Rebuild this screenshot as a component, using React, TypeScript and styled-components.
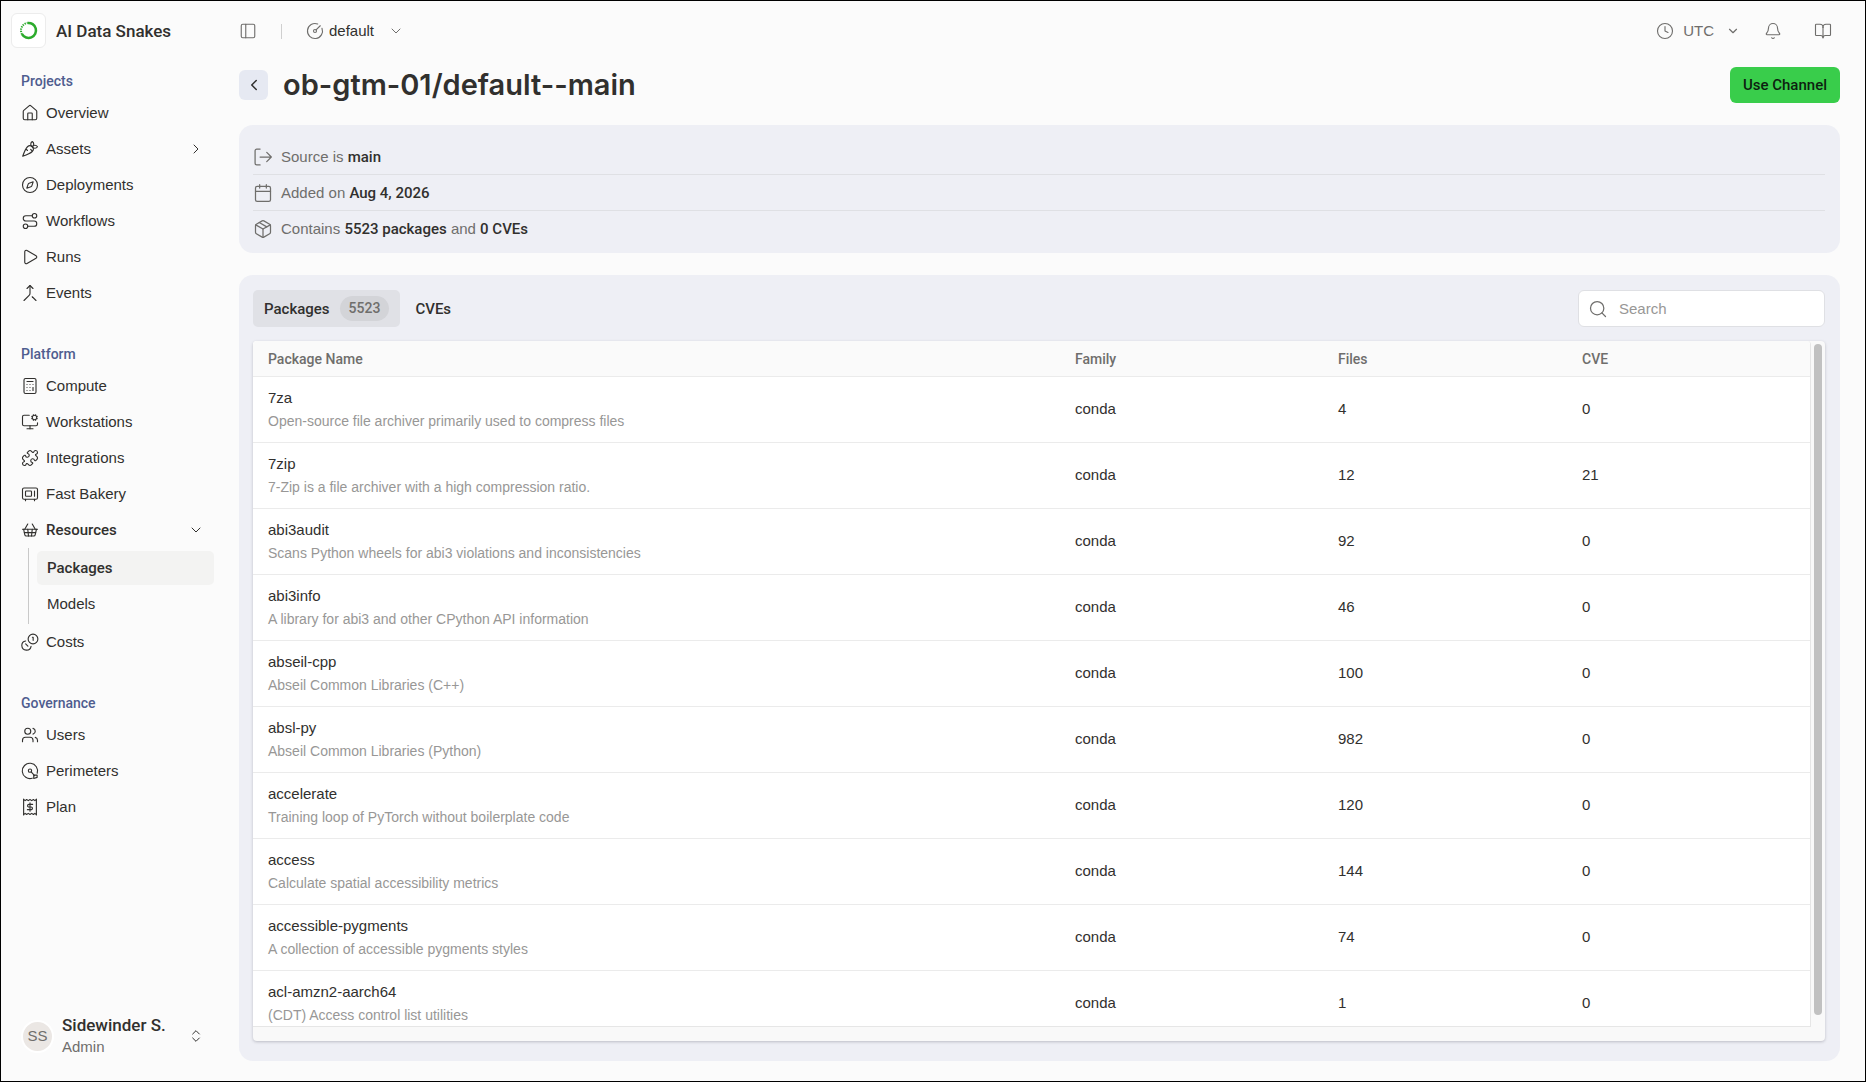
import React from "react";
import styled, { createGlobalStyle } from "styled-components";
import {
  Bell,
  BookOpen,
  Calculator,
  Calendar,
  Carrot,
  ChevronDown,
  ChevronLeft,
  ChevronRight,
  ChevronsUpDown,
  CircleGauge,
  Clock,
  Compass,
  House,
  Merge,
  Microwave,
  MonitorCog,
  Package,
  PanelLeft,
  Play,
  Puzzle,
  Route,
  Search,
  ShoppingBasket,
  Users,
} from "lucide-react";

const fonts = {
  body: '"Liberation Sans", Arial, sans-serif',
  strong: 'Roboto, "Liberation Sans", sans-serif',
  display: 'Inter, "Liberation Sans", sans-serif',
};

const colors = {
  page: "#fbfbfb",
  panel: "#eeeff5",
  line: "#dfe0e4",
  ink: "#31302e",
  muted: "#6f6e6c",
  faint: "#989796",
  heading: "#4f5d8f",
  accent: "#39cd4b",
};

const GlobalStyle = createGlobalStyle`
  *, *::before, *::after { box-sizing: border-box; }
  body {
    margin: 0;
    background: ${colors.page};
    color: ${colors.ink};
    font-family: ${fonts.body};
    font-size: 15px;
    line-height: 20px;
  }
  button, input, select { font: inherit; color: inherit; }
  button { border: 0; background: none; padding: 0; cursor: pointer; }
  a { color: inherit; text-decoration: none; }
  ul { list-style: none; margin: 0; padding: 0; }
  svg { flex: none; display: block; }
`;

const Shell = styled.div`
  display: flex;
  height: 100vh;
  min-height: 640px;
  border: 1px solid #000;
  background: ${colors.page};
`;

const Sidebar = styled.aside`
  display: flex;
  flex-direction: column;
  flex: none;
  width: 238px;
  padding: 12px 25px 23px 10px;
`;

const Brand = styled.div`
  display: flex;
  align-items: center;
  gap: 10px;
  margin-bottom: 20px;
`;

const BrandMark = styled.span`
  display: grid;
  place-items: center;
  width: 35px;
  height: 35px;
  border: 1px solid #ececec;
  border-radius: 6px;
  background: #fff;
`;

const BrandName = styled.span`
  font-family: ${fonts.strong};
  font-size: 17px;
  font-weight: 500;
`;

const NavSection = styled.section`
  margin-bottom: 30px;
`;

const NavHeading = styled.h2`
  margin: 0;
  padding: 0 10px;
  font-family: ${fonts.strong};
  font-size: 14px;
  font-weight: 500;
  line-height: 27px;
  color: ${colors.heading};
`;

const NavLink = styled.a<{ $open?: boolean }>`
  display: flex;
  align-items: center;
  gap: 7px;
  height: 36px;
  padding: 0 10px;
  font-family: ${({ $open }) => ($open ? fonts.strong : fonts.body)};
  font-weight: ${({ $open }) => ($open ? 500 : 400)};
`;

const NavLabel = styled.span`
  flex: 1;
`;

const SubNav = styled.ul`
  && {
    padding: 3px 0 3px 8px;
    margin-left: 17px;
  }
  display: flex;
  flex-direction: column;
  gap: 2px;
  border-left: 1px solid #c9c9c9;
`;

const SubLink = styled.a<{ $active?: boolean }>`
  display: flex;
  align-items: center;
  height: 34px;
  padding: 0 10px;
  border-radius: 5px;
  background: ${({ $active }) => ($active ? "#f3f3f2" : "transparent")};
  font-family: ${({ $active }) => ($active ? fonts.strong : fonts.body)};
  font-weight: ${({ $active }) => ($active ? 500 : 400)};
`;

const Account = styled.button`
  display: flex;
  align-items: center;
  gap: 8px;
  margin-top: auto;
  padding: 0 10px;
  text-align: left;
`;

const Avatar = styled.span`
  display: grid;
  place-items: center;
  width: 33px;
  height: 33px;
  border: 2px solid #fff;
  border-radius: 50%;
  background: #ebe7e4;
  color: ${colors.muted};
`;

const AccountText = styled.span`
  display: flex;
  flex: 1;
  flex-direction: column;
  line-height: 22px;
  color: ${colors.muted};
`;

const AccountName = styled.strong`
  font-family: ${fonts.strong};
  font-size: 17px;
  font-weight: 500;
  color: ${colors.ink};
`;

const Main = styled.main`
  display: flex;
  flex: 1;
  flex-direction: column;
  min-width: 0;
  padding: 10px 25px 20px 0;
`;

const TopBar = styled.header`
  display: flex;
  align-items: center;
  justify-content: space-between;
  height: 40px;
  padding: 0 8px 0 0;
  color: ${colors.muted};
`;

const TopGroup = styled.div<{ $gap?: number }>`
  display: flex;
  align-items: center;
  gap: ${({ $gap = 0 }) => $gap}px;
`;

const IconButton = styled.button`
  display: grid;
  place-items: center;
  width: 18px;
  height: 32px;
`;

const Divider = styled.span`
  width: 1px;
  height: 15px;
  background: #cfcfcf;
`;

const PickerButton = styled.button`
  display: flex;
  align-items: center;
`;

const PickerLabel = styled.span<{ $strong?: boolean }>`
  margin: ${({ $strong }) => ($strong ? "0 14px 0 5px" : "0 12px 0 9px")};
  color: ${({ $strong }) => ($strong ? colors.ink : colors.muted)};
`;

const TitleRow = styled.div`
  display: flex;
  align-items: center;
  gap: 15px;
  margin: 16px 0 22px;
`;

const BackLink = styled.a`
  display: grid;
  place-items: center;
  width: 29px;
  height: 30px;
  border-radius: 6px;
  background: #e6e9f2;
`;

const Title = styled.h1`
  flex: 1;
  margin: 0;
  font-family: ${fonts.display};
  font-size: 29px;
  font-weight: 600;
  line-height: 36px;
`;

const PrimaryButton = styled.button`
  height: 36px;
  padding: 0 13px;
  border-radius: 6px;
  background: ${colors.accent};
  color: #0d1f10;
  font-family: ${fonts.strong};
  font-weight: 500;
`;

const Facts = styled.ul`
  && {
    padding: 14px 15px 7px 14px;
  }
  border-radius: 14px;
  background: ${colors.panel};
`;

const Fact = styled.li`
  display: flex;
  align-items: center;
  gap: 8px;
  height: 35px;
  color: ${colors.muted};

  & + & {
    height: 36px;
    border-top: 1px solid ${colors.line};
  }

  strong {
    font-family: ${fonts.strong};
    font-weight: 500;
    color: ${colors.ink};
  }
`;

const Panel = styled.section`
  display: flex;
  flex: 1;
  flex-direction: column;
  gap: 14px;
  min-height: 0;
  margin-top: 22px;
  padding: 15px 15px 20px 14px;
  border-radius: 14px;
  background: ${colors.panel};
`;

const PanelTools = styled.div`
  display: flex;
  align-items: center;
  justify-content: space-between;
`;

const Tabs = styled.div`
  display: flex;
  gap: 4px;
`;

const Tab = styled.button<{ $active?: boolean }>`
  display: flex;
  align-items: center;
  gap: 10px;
  height: 37px;
  padding: 0 11px;
  border-radius: 5px;
  background: ${({ $active }) => ($active ? "#e0e1e6" : "transparent")};
  font-family: ${fonts.strong};
  font-weight: 500;
`;

const Count = styled.span`
  padding: 2px 9px;
  border-radius: 13px;
  background: #d3d4d8;
  color: ${colors.muted};
  font-size: 14px;
  line-height: 21px;
`;

const SearchBox = styled.label`
  display: flex;
  align-items: center;
  gap: 11px;
  width: 247px;
  height: 37px;
  padding: 0 9px;
  border: 1px solid ${colors.line};
  border-radius: 6px;
  background: #fff;
  color: ${colors.muted};
`;

const SearchInput = styled.input`
  flex: 1;
  min-width: 0;
  border: 0;
  padding: 0;
  outline: 0;
  background: transparent;

  &::placeholder {
    color: ${colors.faint};
    opacity: 1;
  }
`;

const TableFrame = styled.div`
  display: flex;
  flex: 1;
  min-height: 0;
  padding-bottom: 14px;
  border-radius: 4px;
  background: #f9f9f9;
  box-shadow: 0 1px 3px rgba(40, 40, 60, 0.25);
`;

const TableViewport = styled.div`
  flex: 1;
  overflow: hidden;
  border: solid #e6e6e6;
  border-width: 0 1px 1px 0;
  border-radius: 4px 4px 0 0;
  background: #fff;
`;

const ScrollTrack = styled.div`
  flex: none;
  width: 14px;
  padding: 3px 3px 12px;
`;

const ScrollThumb = styled.div`
  height: 100%;
  border-radius: 4px;
  background: #c1c1c1;
`;

const Table = styled.table`
  width: 100%;
  border-collapse: separate;
  border-spacing: 0;
  table-layout: fixed;
`;

const HeadCell = styled.th<{ $width?: number }>`
  width: ${({ $width }) => ($width ? `${$width}px` : "auto")};
  height: 36px;
  padding: 0 15px;
  border-bottom: 1px solid #ebebeb;
  background: #fafafa;
  color: ${colors.muted};
  font-family: ${fonts.strong};
  font-size: 14px;
  font-weight: 500;
  text-align: left;
`;

const Cell = styled.td`
  height: 66px;
  padding: 0 15px 2px;
  border-bottom: 1px solid #ebebeb;
`;

const PackageCell = styled(Cell)`
  padding-bottom: 0;
`;

const PackageName = styled.div`
  margin-bottom: 3px;
`;

const PackageNote = styled.div`
  color: ${colors.faint};
  font-size: 14px;
`;

type IconProps = { size?: number; strokeWidth?: number };

const Glyph = ({
  size = 16,
  strokeWidth = 2,
  children,
}: IconProps & { children: React.ReactNode }) => (
  <svg
    width={size}
    height={size}
    viewBox="0 0 24 24"
    fill="none"
    stroke="currentColor"
    strokeWidth={strokeWidth}
    strokeLinecap="round"
    strokeLinejoin="round"
    aria-hidden="true"
  >
    {children}
  </svg>
);

const CostsIcon = (p: IconProps) => (
  <Glyph {...p}>
    <circle cx="16" cy="8" r="6.5" />
    <path d="M6.2 10.6A6.2 6.2 0 1 0 13.4 17.8" />
    <path d="M15.2 5.6h1v4.2" />
    <path d="m6.2 14.6 3 3" />
  </Glyph>
);

const PerimeterIcon = (p: IconProps) => (
  <Glyph {...p}>
    <path d="M15 21.600A10.200 10.200 0 1 1 21.600 15" />
    <circle cx="12" cy="11.500" r="2.200" />
    <path d="m13.600 13.100 4.400 5" />
    <path d="M17 17.500v4.500l4.500-1.500v-3z" />
  </Glyph>
);

const PlanIcon = (p: IconProps) => (
  <Glyph {...p}>
    <path d="M3.500 1.500v21M20.500 1.500v21" />
    <path d="M3.500 2l2 1.500 2-1.500 2.200 1.500L12 2l2.300 1.500 2.200-1.500 2 1.500 2-1.500M3.500 22l2-1.500 2 1.500 2.200-1.500L12 22l2.300-1.500 2.200 1.500 2-1.500 2 1.500" />
    <path d="M15.500 8.500h-5a1.750 1.750 0 0 0 0 3.500h3a1.750 1.750 0 0 1 0 3.500h-5M12 6.500v11" />
  </Glyph>
);

const SourceIcon = (p: IconProps) => (
  <Glyph {...p}>
    <path d="M8.500 2.500H4.500A2 2 0 0 0 2.500 4.500v15A2 2 0 0 0 4.500 21.500h4" />
    <path d="M8.500 12H22M16.500 6.500l5.500 5.500-5.500 5.500" />
  </Glyph>
);

const RingLogo = () => (
  <svg width="19" height="19" viewBox="0 0 19 19" fill="none" aria-hidden="true">
    <path d="M8.500 2A7.500 7.500 0 1 1 3 13.200" stroke="#2cab2c" strokeWidth="2.600" />
    <path
      d="M3 13.200A7.500 7.500 0 0 1 8.500 2"
      stroke="#2cab2c"
      strokeWidth="2"
      strokeDasharray="1.300 1"
    />
  </svg>
);

type NavItem = {
  label: string;
  icon: React.ComponentType<any>;
  trail?: "right" | "down";
  children?: { label: string; active?: boolean }[];
};

const navigation: { title: string; items: NavItem[] }[] = [
  {
    title: "Projects",
    items: [
      { label: "Overview", icon: House },
      { label: "Assets", icon: Carrot, trail: "right" },
      { label: "Deployments", icon: Compass },
      { label: "Workflows", icon: Route },
      { label: "Runs", icon: Play },
      { label: "Events", icon: Merge },
    ],
  },
  {
    title: "Platform",
    items: [
      { label: "Compute", icon: Calculator },
      { label: "Workstations", icon: MonitorCog },
      { label: "Integrations", icon: Puzzle },
      { label: "Fast Bakery", icon: Microwave },
      {
        label: "Resources",
        icon: ShoppingBasket,
        trail: "down",
        children: [{ label: "Packages", active: true }, { label: "Models" }],
      },
      { label: "Costs", icon: CostsIcon },
    ],
  },
  {
    title: "Governance",
    items: [
      { label: "Users", icon: Users },
      { label: "Perimeters", icon: PerimeterIcon },
      { label: "Plan", icon: PlanIcon },
    ],
  },
];

const packages = [
  { name: "7za", note: "Open-source file archiver primarily used to compress files", files: 4, cve: 0 },
  { name: "7zip", note: "7-Zip is a file archiver with a high compression ratio.", files: 12, cve: 21 },
  { name: "abi3audit", note: "Scans Python wheels for abi3 violations and inconsistencies", files: 92, cve: 0 },
  { name: "abi3info", note: "A library for abi3 and other CPython API information", files: 46, cve: 0 },
  { name: "abseil-cpp", note: "Abseil Common Libraries (C++)", files: 100, cve: 0 },
  { name: "absl-py", note: "Abseil Common Libraries (Python)", files: 982, cve: 0 },
  { name: "accelerate", note: "Training loop of PyTorch without boilerplate code", files: 120, cve: 0 },
  { name: "access", note: "Calculate spatial accessibility metrics", files: 144, cve: 0 },
  { name: "accessible-pygments", note: "A collection of accessible pygments styles", files: 74, cve: 0 },
  { name: "acl-amzn2-aarch64", note: "(CDT) Access control list utilities", files: 1, cve: 0 },
];

const NavEntry = ({ item }: { item: NavItem }) => {
  const Icon = item.icon;
  return (
    <li>
      <NavLink href="#" $open={Boolean(item.children)}>
        <Icon size={18} strokeWidth={1.5} />
        <NavLabel>{item.label}</NavLabel>
        {item.trail === "right" && <ChevronRight size={16} strokeWidth={1.5} />}
        {item.trail === "down" && <ChevronDown size={16} strokeWidth={1.5} />}
      </NavLink>
      {item.children && (
        <SubNav>
          {item.children.map((child) => (
            <li key={child.label}>
              <SubLink href="#" $active={child.active}>
                {child.label}
              </SubLink>
            </li>
          ))}
        </SubNav>
      )}
    </li>
  );
};

export default function App() {
  return (
    <>
      <GlobalStyle />
      <Shell>
        <Sidebar>
          <Brand>
            <BrandMark>
              <RingLogo />
            </BrandMark>
            <BrandName>AI Data Snakes</BrandName>
          </Brand>
          <nav>
            {navigation.map((section) => (
              <NavSection key={section.title}>
                <NavHeading>{section.title}</NavHeading>
                <ul>
                  {section.items.map((item) => (
                    <NavEntry key={item.label} item={item} />
                  ))}
                </ul>
              </NavSection>
            ))}
          </nav>
          <Account type="button">
            <Avatar>SS</Avatar>
            <AccountText>
              <AccountName>Sidewinder S.</AccountName>
              Admin
            </AccountText>
            <ChevronsUpDown size={16} strokeWidth={1.5} />
          </Account>
        </Sidebar>

        <Main>
          <TopBar>
            <TopGroup $gap={24}>
              <IconButton type="button" aria-label="Toggle sidebar">
                <PanelLeft size={18} strokeWidth={1.5} />
              </IconButton>
              <Divider />
              <PickerButton type="button">
                <CircleGauge size={18} strokeWidth={1.5} />
                <PickerLabel $strong>default</PickerLabel>
                <ChevronDown size={16} strokeWidth={1.5} />
              </PickerButton>
            </TopGroup>
            <TopGroup $gap={24}>
              <PickerButton type="button">
                <Clock size={18} strokeWidth={1.5} />
                <PickerLabel>UTC</PickerLabel>
                <ChevronDown size={14} strokeWidth={2} />
              </PickerButton>
              <TopGroup $gap={32}>
                <IconButton type="button" aria-label="Notifications">
                  <Bell size={18} strokeWidth={1.5} />
                </IconButton>
                <IconButton type="button" aria-label="Documentation">
                  <BookOpen size={18} strokeWidth={1.5} />
                </IconButton>
              </TopGroup>
            </TopGroup>
          </TopBar>

          <TitleRow>
            <BackLink href="#" aria-label="Back">
              <ChevronLeft size={18} strokeWidth={2} />
            </BackLink>
            <Title>ob-gtm-01/default--main</Title>
            <PrimaryButton type="button">Use Channel</PrimaryButton>
          </TitleRow>

          <Facts>
            <Fact>
              <SourceIcon size={20} strokeWidth={1.5} />
              <span>
                Source is <strong>main</strong>
              </span>
            </Fact>
            <Fact>
              <Calendar size={20} strokeWidth={1.5} />
              <span>
                Added on <strong>Aug 4, 2026</strong>
              </span>
            </Fact>
            <Fact>
              <Package size={20} strokeWidth={1.5} />
              <span>
                Contains <strong>5523 packages</strong> and <strong>0 CVEs</strong>
              </span>
            </Fact>
          </Facts>

          <Panel>
            <PanelTools>
              <Tabs role="tablist">
                <Tab type="button" role="tab" aria-selected="true" $active>
                  Packages <Count>5523</Count>
                </Tab>
                <Tab type="button" role="tab" aria-selected="false">
                  CVEs
                </Tab>
              </Tabs>
              <SearchBox>
                <Search size={20} strokeWidth={1.5} />
                <SearchInput type="text" placeholder="Search" aria-label="Search" />
              </SearchBox>
            </PanelTools>

            <TableFrame>
              <TableViewport>
                <Table>
                  <thead>
                    <tr>
                      <HeadCell>Package Name</HeadCell>
                      <HeadCell $width={263}>Family</HeadCell>
                      <HeadCell $width={244}>Files</HeadCell>
                      <HeadCell $width={243}>CVE</HeadCell>
                    </tr>
                  </thead>
                  <tbody>
                    {packages.map((pkg) => (
                      <tr key={pkg.name}>
                        <PackageCell>
                          <PackageName>{pkg.name}</PackageName>
                          <PackageNote>{pkg.note}</PackageNote>
                        </PackageCell>
                        <Cell>conda</Cell>
                        <Cell>{pkg.files}</Cell>
                        <Cell>{pkg.cve}</Cell>
                      </tr>
                    ))}
                  </tbody>
                </Table>
              </TableViewport>
              <ScrollTrack>
                <ScrollThumb />
              </ScrollTrack>
            </TableFrame>
          </Panel>
        </Main>
      </Shell>
    </>
  );
}
